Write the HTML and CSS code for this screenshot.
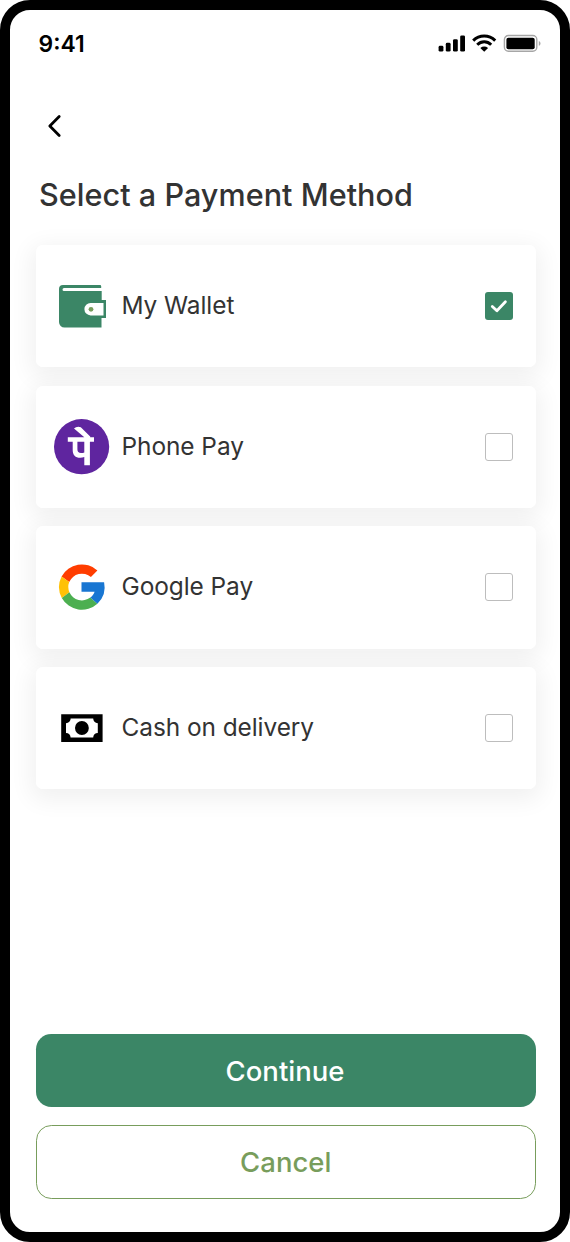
FILE: index.html
```html
<!DOCTYPE html>
<html lang="en">
<head>
<meta charset="utf-8">
<title>Select a Payment Method</title>
<link rel="stylesheet" href="styles.css">
</head>
<body>
<main class="phone">
  <header class="status">
    <span class="time">9:41</span>
    <svg class="indicators" width="104" height="20" viewBox="0 0 104 20" aria-hidden="true">
      <rect x="1.6" y="11.8" width="4.8" height="5.8" rx="1.4"/>
      <rect x="8.8" y="8.8" width="4.8" height="8.8" rx="1.4"/>
      <rect x="16" y="5.2" width="4.8" height="12.4" rx="1.4"/>
      <rect x="23.2" y="1.4" width="4.8" height="16.2" rx="1.4"/>
      <path d="M36.2 6.6C42.4.4 52 .4 58.2 6.6M40.2 10.7c4.1-4 9.9-4 14 0" fill="none" stroke="#000" stroke-width="3"/>
      <path d="M43.3 13.9c2.4-1.9 5.4-1.9 7.8 0L47.2 17.7z"/>
      <rect x="67.4" y="1.5" width="32.4" height="15.8" rx="4" fill="none" stroke="#a6a6a6" stroke-width="1.4"/>
      <rect x="69.4" y="3.7" width="28.3" height="11.5" rx="2"/>
      <path d="M101.8 7.1v4.7c2.3-.9 2.3-3.8 0-4.7" fill="#a6a6a6"/>
    </svg>
  </header>
  <button class="back" aria-label="Back">
    <svg width="18" height="24" viewBox="0 0 18 24"><path d="M15.2 2.6 5.8 12l9.4 9.4" fill="none" stroke="#000" stroke-width="2.8" stroke-linecap="round" stroke-linejoin="round"/></svg>
  </button>
  <h1 class="title">Select a Payment Method</h1>
  <section class="methods">
    <label class="card">
      <svg class="icon" width="56" height="56" viewBox="0 0 56 56">
        <path d="M9 7H46a1.2 1.2 0 0 1 1.2 1.2V10H10a1.3 1.3 0 0 0 0 3h37.7v9H52v18h-4.5v9.5H10.5A5.5 5.5 0 0 1 5 44V11A4 4 0 0 1 9 7" fill="#3b8666"/>
        <path d="M49.5 25v12.4H36.6a6.2 6.2 0 0 1 0-12.4z" fill="#fff"/><circle cx="37" cy="31.3" r="2.4" fill="#789d5c"/>
      </svg>
      <span class="name">My Wallet</span>
      <span class="check checked"><svg width="28" height="28" viewBox="0 0 28 28"><path d="m7.3 14.4 4.6 4.3 8.5-8.9" fill="none" stroke="#fff" stroke-width="2.8" stroke-linecap="round" stroke-linejoin="round"/></svg></span>
    </label>
    <label class="card">
      <svg class="icon" width="56" height="56" viewBox="0 0 56 56">
        <circle cx="27.6" cy="27.7" r="27.6" fill="#5f259f"/>
        <path d="M13.8 18.2h7.5 9L20 9.6q2.6-2.6 6.8-1.4L36.2 17.4v.8h3.8v4.6h-4.1v23.4h-5.6v-8.1c-1.4.5-2.7.7-4 .7-5 0-7.6-2.7-7.6-7.8v-8.2h-4.9zM23.4 22.8v7.4c0 2.5 1.2 3.8 3.6 3.8 1.3 0 2.4-.2 3.3-.6V22.8z" fill="#fff" fill-rule="evenodd"/>
      </svg>
      <span class="name">Phone Pay</span>
      <span class="check"></span>
    </label>
    <label class="card">
      <svg class="icon" width="56" height="56" viewBox="0 0 56 56">
        <path d="M43.4 11.4A23 23 0 0 0 7.6 17.6l7.6 5.5A13.8 13.8 0 0 1 36.9 18z" fill="#ff3d00"/>
        <path d="M7.6 17.6a23 23 0 0 0 .2 21.4l7.6-5.7a13.8 13.8 0 0 1-.2-10.2z" fill="#ffc107"/>
        <path d="M7.8 39a23 23 0 0 0 35.6 5.7L36.3 38.6a13.8 13.8 0 0 1-20.9-5.3z" fill="#4caf50"/>
        <path d="M27.5 23.2h22.6a23 23 0 0 1-6.7 21.5L36.3 38.6c2-1.4 3.5-3.3 4.3-5.8H27.5z" fill="#1976d2"/>
      </svg>
      <span class="name">Google Pay</span>
      <span class="check"></span>
    </label>
    <label class="card">
      <svg class="icon" width="56" height="56" viewBox="0 0 56 56">
        <path d="M7.2 14.2h41.4v27.7H7.2z"/>
        <path d="M16.6 18.6h22.6c0 2.5 1.9 4.6 4.6 4.6v9.7c-2.7 0-4.6 2-4.6 4.6H16.6c0-2.6-1.9-4.6-4.6-4.6v-9.7c2.7 0 4.6-2.1 4.6-4.6" fill="#fff"/><circle cx="27.9" cy="28" r="6.9"/>
      </svg>
      <span class="name">Cash on delivery</span>
      <span class="check"></span>
    </label>
  </section>
  <footer class="actions">
    <button class="btn primary">Continue</button>
    <button class="btn secondary">Cancel</button>
  </footer>
</main>
</body>
</html>
```
FILE: styles.css
```css
* { box-sizing: border-box; }
body { margin: 0; background: #fff; font-family: Inter, sans-serif; }
button { font: inherit; cursor: pointer; }
.phone {
  width: 570px; height: 1242px;
  display: flex; flex-direction: column;
  padding: 21px 24.5px 33.5px 26px;
  border: 10px solid #000; border-radius: 30px;
  background: #fff; color: #333;
  overflow: hidden;
}
.status {
  height: 24px; padding: 0 0 0 2.5px;
  display: flex; align-items: center; justify-content: space-between;
  color: #000;
}
.time { font-size: 22.9px; line-height: 24px; font-weight: 600; padding-top: 1px; }
.indicators { margin: 1px -5.5px 0 0; }
.back {
  width: 18px; height: 24px; margin: 59px 0 0 8px;
  padding: 0; border: 0; background: none; display: flex;
}
.title {
  margin: 37px 0 0 3px; height: 40px;
  font-size: 30.55px; line-height: 40px; font-weight: 500; letter-spacing: .05px; white-space: nowrap;
}
.methods {
  margin-top: 30.2px;
  display: flex; flex-direction: column; gap: 18.4px;
  isolation: isolate;
}
.card {
  position: relative; height: 122.2px; padding: 0 22.3px 0 18px;
  display: flex; align-items: center;
  border-radius: 7px; background: #fff;
}
.card::before {
  content: ""; position: absolute; inset: 0; z-index: -1;
  border-radius: 7px; box-shadow: 0 6px 23px 5px rgba(0, 0, 0, .06);
}
.icon { flex: none; }
.name { margin: -2px 0 0 11.5px; font-size: 24.44px; line-height: 32px; letter-spacing: -.07px; white-space: nowrap; }
.check {
  width: 28px; height: 28px; margin-left: auto;
  border: 1px solid #bdbdbd; border-radius: 3px;
}
.checked { border: 0; background: #3b8666; }
.checked svg { display: block; }
.actions { margin-top: auto; display: flex; flex-direction: column; gap: 18.4px; }
.btn {
  height: 73.3px; padding: 1px 1.5px 0 0;
  border: 0; border-radius: 15.3px;
  font-size: 27.5px; font-weight: 500;
}
.primary { background: #3b8666; color: #fff; }
.secondary { background: #fff; color: #789d5c; border: 1.5px solid #789d5c; padding-right: 0; }
```
